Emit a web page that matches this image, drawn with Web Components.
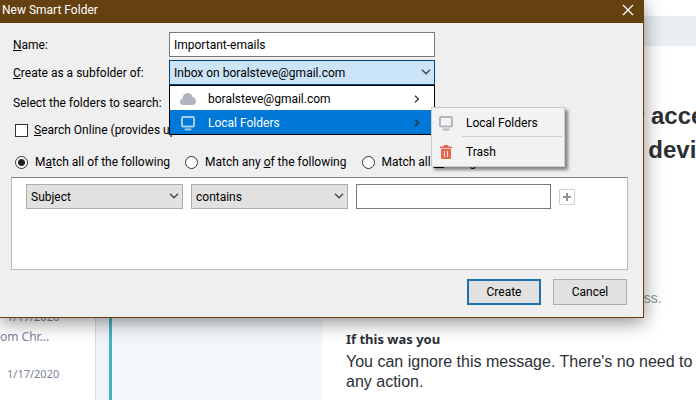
<!DOCTYPE html>
<html lang="en">
<head>
<meta charset="utf-8">
<title>New Smart Folder</title>
<style>
    body {
        margin: 0;
        height: 100vh;
        overflow: hidden;
        background: #fff;
        font-family: Roboto, "Open Sans", sans-serif;
        font-size: 12px;
        line-height: 20px;
        color: #000;
    }
</style>
</head>
<body>
<mail-window>
    <mail-list slot="list">
        <mail-item date="1/17/2020">om Chr...</mail-item>
        <mail-item date="1/17/2020"></mail-item>
    </mail-list>
    <mail-message>
        <span slot="title">r acce<br>&nbsp;&nbsp;devic</span>
        <span slot="note">ess.</span>
        <span slot="subtitle">If this was you</span>
        You can ignore this message. There's no need to<br>any action.
    </mail-message>
</mail-window>
<smart-dialog heading="New Smart Folder">
    <text-field value="Important-emails"><u>N</u>ame:</text-field>
    <folder-picker value="Inbox on boralsteve@gmail.com">
        <span slot="label"><u>C</u>reate as a subfolder of:</span>
        <menu-item icon="cloud" submenu>boralsteve@gmail.com</menu-item>
        <menu-item icon="screen" submenu selected>Local Folders
            <sub-menu slot="sub">
                <menu-item icon="screen" tall>Local Folders</menu-item>
                <menu-item icon="trash" tall divided>Trash</menu-item>
            </sub-menu>
        </menu-item>
    </folder-picker>
    <folder-search>Select the folders to search:</folder-search>
    <check-option><u>S</u>earch Online (provides up</check-option>
    <match-options></match-options>
    <search-terms></search-terms>
    <dialog-button slot="actions" primary>Create</dialog-button>
    <dialog-button slot="actions">Cancel</dialog-button>
</smart-dialog>

<script>
const icons = {
    cloud: `<svg width="18" height="16" viewBox="0 0 18 16"><path fill="#b1b5c0" d="M4 14a3 3 0 0 1-3-3.200c0-1.700 1-2.800 2.500-3.100C3.600 4.300 6 2 8.800 2c2.500 0 4.300 1.500 4.800 4 2.100.4 3.400 2.200 3.400 4.200 0 2.400-1.500 3.800-3.500 3.800z"/></svg>`,
    screen: `<svg width="16" height="16" viewBox="0 0 16 16" fill="none" stroke="currentColor" stroke-width="2"><rect x="2" y="2" width="12" height="9.500" rx="1"/><path d="M5.500 14.500h5" stroke-linecap="round"/></svg>`,
    trash: `<svg width="16" height="16" viewBox="0 0 16 16" fill="#e5674f"><path d="M5.500 2.500c0-1 .6-1.500 1.500-1.500h2c.9 0 1.500.5 1.500 1.500h3.500v1.800H2V2.500z"/><path d="M3 5h10v8.500c0 1-.6 1.500-1.500 1.500h-7C3.600 15 3 14.500 3 13.500z"/><path d="M6.500 7v6M9.500 7v6" stroke="#fff" stroke-opacity=".75" stroke-width="1"/></svg>`,
    down: `<svg width="10" height="6" viewBox="0 0 10 6" fill="none" stroke="#444" stroke-width="1.300"><path d="M1 .8l4 4 4-4"/></svg>`,
    right: `<svg width="6" height="8" viewBox="0 0 6 8" fill="none" stroke="#333" stroke-width="1.300"><path d="M1 .8l3.400 3.200L1 7.200"/></svg>`,
    close: `<svg width="12" height="12" viewBox="0 0 12 12" fill="none" stroke="#fff" stroke-width="1.300"><path d="M1 1l10 10M11 1L1 11"/></svg>`,
    plus: `<svg width="8" height="8" viewBox="0 0 8 8" stroke="#8b9499" stroke-width="2"><path d="M4 0v8M0 4h8"/></svg>`
};

// Shared look of the form controls
const controls = `
    * { box-sizing: border-box; }
    input, select, button { font: inherit; color: inherit; margin: 0; }
    .row { display: grid; grid-template-columns: 156px 266px; align-items: center; }
    .text {
        width: 100%;
        height: 25px;
        padding: 0 4px;
        border: 1px solid #7a7a7a;
        border-radius: 0;
        background: #fff;
        outline: none;
    }
    .select { position: relative; display: block; }
    .select select {
        appearance: none;
        display: block;
        width: 100%;
        height: 25px;
        padding: 0 20px 0 4px;
        border: 1px solid #adadad;
        border-radius: 0;
        background: #e1e1e1;
        outline: none;
    }
    .select svg { position: absolute; right: 4px; top: 9px; pointer-events: none; }
    .mark {
        appearance: none;
        flex: none;
        width: 13px;
        height: 13px;
        border: 1px solid #333;
        background: #fff;
    }
    .option { display: flex; align-items: center; white-space: nowrap; }
`;

function define(name, render) {
    customElements.define(name, class extends HTMLElement {
        constructor() {
            super();
            this.attachShadow({ mode: 'open' });
        }

        connectedCallback() {
            const template = document.createElement('template');
            template.innerHTML = render(this);
            this.shadowRoot.replaceChildren(template.content.cloneNode(true));
        }
    });
}

// Mail client behind the dialog
define('mail-window', () => `
    <style>
        :host { display: flex; height: 100%; }
        .gutter { flex: none; width: 13px; background: #f0f3f7; border-left: 1px solid #d5d9e0; }
        .side { flex: none; width: 210px; background: #f3f7fb; border-left: 3px solid #46b1c5; }
    </style>
    <slot name="list"></slot>
    <div class="gutter"></div>
    <div class="side"></div>
    <slot></slot>
`);

define('mail-list', () => `
    <style>
        :host {
            display: flex;
            flex-direction: column;
            justify-content: flex-end;
            flex: none;
            width: 95px;
            padding-bottom: 16px;
            box-sizing: border-box;
            gap: 17px;
            color: #7d839b;
            font-family: "Noto Sans", sans-serif;
        }
    </style>
    <slot></slot>
`);

define('mail-item', (el) => `
    <style>
        :host { display: block; white-space: nowrap; }
        time { display: block; padding-left: 7px; font-size: 11px; }
    </style>
    <time>${el.getAttribute('date')}</time>
    <slot></slot>
`);

define('mail-message', () => `
    <style>
        :host {
            display: block;
            flex: 1;
            min-width: 0;
            overflow: hidden;
            padding-top: 16px;
            white-space: nowrap;
            font-family: "Liberation Sans", Arial, sans-serif;
            color: #2b3036;
        }
        .bar { height: 30px; background: #e9eef1; }
        h1 { margin: 53px 0 0 313px; font-size: 24px; line-height: 34px; }
        .note { margin: 121px 0 0 314px; font-size: 14px; line-height: 20px; color: #8b959c; }
        section { padding: 21px 0 0 24px; font-size: 16px; line-height: 20px; }
        h2 { margin: 0 0 3px; font: bold 13px/20px "Noto Sans", sans-serif; }
    </style>
    <div class="bar"></div>
    <h1><slot name="title"></slot></h1>
    <div class="note"><slot name="note"></slot></div>
    <section>
        <h2><slot name="subtitle"></slot></h2>
        <slot></slot>
    </section>
`);

// Dialog window
define('smart-dialog', (el) => `
    <style>
        :host {
            position: absolute;
            top: 0;
            left: 0;
            right: 52px;
            background: #efefef;
            border: solid #654010;
            border-width: 0 1px 1px 0;
            box-shadow: 0 4px 18px rgba(0, 0, 0, .45);
        }
        header {
            display: flex;
            align-items: center;
            justify-content: space-between;
            height: 23px;
            padding: 0 9px 3px 2px;
            box-sizing: border-box;
            background: #654010;
            color: #fff;
        }
        h1 { margin: 0; font: inherit; }
        header button { display: flex; padding: 0; border: 0; background: none; }
        main { display: flex; flex-direction: column; gap: 3px; padding: 9px 15px 0 13px; }
        footer { display: flex; justify-content: flex-end; gap: 12px; padding: 9px 16px 12px; }
    </style>
    <header>
        <h1>${el.getAttribute('heading')}</h1>
        <button aria-label="Close">${icons.close}</button>
    </header>
    <main><slot></slot></main>
    <footer><slot name="actions"></slot></footer>
`);

define('text-field', (el) => `
    <style>
        ${controls}
        :host { display: block; }
    </style>
    <div class="row">
        <label for="field"><slot></slot></label>
        <input class="text" id="field" type="text" value="${el.getAttribute('value')}">
    </div>
`);

define('folder-picker', (el) => `
    <style>
        ${controls}
        :host { display: block; }
        .select select { background: #cce4f7; border-color: #00447a; }
        .menu {
            position: absolute;
            z-index: 1;
            top: 100%;
            left: 0;
            right: 0;
            border: 1px solid #000;
            background: #fff;
        }
    </style>
    <div class="row">
        <label for="folder"><slot name="label"></slot></label>
        <div class="select">
            <select id="folder"><option>${el.getAttribute('value')}</option></select>
            ${icons.down}
            <div class="menu" role="menu"><slot></slot></div>
        </div>
    </div>
`);

define('menu-item', (el) => `
    <style>
        :host { display: block; position: relative; color: #000; white-space: nowrap; }
        button {
            display: grid;
            grid-template-columns: 18px 1fr 6px;
            column-gap: 11px;
            align-items: center;
            justify-items: start;
            width: 100%;
            height: 24px;
            padding: 1px 14px 0 9px;
            border: 0;
            background: none;
            font: inherit;
            color: inherit;
        }
        .icon { display: flex; justify-content: center; width: 18px; color: #b1b5c0; }
        :host([selected]) { background: #0078d7; color: #fff; }
        :host([selected]) .icon { color: #a8cdee; }
        :host([tall]) button { grid-template-columns: 18px 1fr; height: 29px; padding: 1px 3px 0 5px; }
        :host([divided])::before {
            content: "";
            display: block;
            height: 1px;
            margin: -1px 2px 0 30px;
            background: #d0d0d0;
        }
    </style>
    <button role="menuitem">
        <span class="icon">${icons[el.getAttribute('icon')]}</span>
        <span><slot></slot></span>
        ${el.hasAttribute('submenu') ? icons.right : ''}
    </button>
    <slot name="sub"></slot>
`);

define('sub-menu', () => `
    <style>
        :host {
            position: absolute;
            top: -3px;
            left: calc(100% - 3px);
            width: 134px;
            box-sizing: border-box;
            border: 1px solid #ccc;
            background: #f2f2f2;
            box-shadow: 3px 3px 3px rgba(0, 0, 0, .45);
        }
    </style>
    <slot></slot>
`);

define('folder-search', () => `
    <style>:host { display: block; padding: 5px 0 1px; }</style>
    <slot></slot>
`);

define('check-option', () => `
    <style>
        ${controls}
        :host { display: block; padding: 3px 2px; }
        .option { gap: 6px; }
    </style>
    <label class="option"><input class="mark" type="checkbox"><span><slot></slot></span></label>
`);

define('match-options', () => `
    <style>
        ${controls}
        :host { display: flex; gap: 15px; padding: 6px 2px 2px; }
        .option { gap: 7px; }
        .mark { border-radius: 50%; }
        .mark:checked { background: radial-gradient(circle, #222 3px, #fff 4px); }
    </style>
    <label class="option"><input class="mark" type="radio" name="match" checked><span>M<u>a</u>tch all of the following</span></label>
    <label class="option"><input class="mark" type="radio" name="match"><span>Match any <u>o</u>f the following</span></label>
    <label class="option"><input class="mark" type="radio" name="match"><span>Match all <u>m</u>essages</span></label>
`);

define('search-terms', () => `
    <style>
        ${controls}
        :host {
            display: block;
            min-height: 93px;
            margin-left: -2px;
            padding: 6px 14px;
            box-sizing: border-box;
            border: 1px solid #b8b8b8;
            border-top-color: #828282;
            background: #fff;
        }
        .terms {
            display: grid;
            grid-template-columns: 157px 157px 195px 16px;
            column-gap: 8px;
            align-items: center;
        }
        .add {
            display: flex;
            align-items: center;
            justify-content: center;
            height: 16px;
            padding: 0;
            border: 1px solid #cfd3d6;
            border-radius: 1px;
            background: #fff;
        }
    </style>
    <div class="terms">
        <div class="select"><select aria-label="Field"><option>Subject</option></select>${icons.down}</div>
        <div class="select"><select aria-label="Condition"><option>contains</option></select>${icons.down}</div>
        <input class="text" type="text" aria-label="Value">
        <button class="add" aria-label="Add rule">${icons.plus}</button>
    </div>
`);

define('dialog-button', () => `
    <style>
        :host { display: block; }
        button {
            width: 74px;
            height: 26px;
            padding: 0;
            border: 1px solid #adadad;
            background: #e1e1e1;
            font: inherit;
            color: #000;
        }
        :host([primary]) button { border: 2px solid #1a70ab; }
    </style>
    <button><slot></slot></button>
`);
</script>
</body>
</html>
